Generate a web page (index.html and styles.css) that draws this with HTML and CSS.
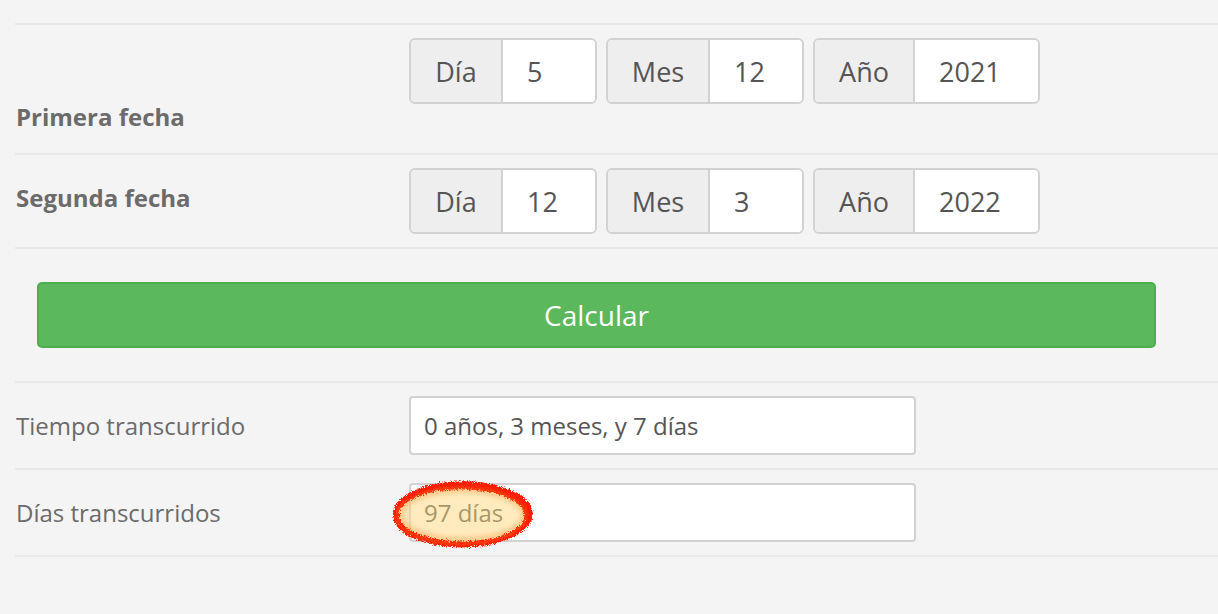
FILE: index.html
```html
<!DOCTYPE html>
<html lang="es">
<head>
<meta charset="utf-8">
<title>Calcular días entre fechas</title>
<link rel="stylesheet" href="styles.css">
</head>
<body>
<div class="form">
  <div class="row row-first">
    <label class="label label-bold label-bottom">Primera fecha</label>
    <div class="fields fields-tall">
      <div class="group"><span class="addon addon-dia">Día</span><span class="input in-dia">5</span></div>
      <div class="group"><span class="addon addon-mes">Mes</span><span class="input in-mes">12</span></div>
      <div class="group"><span class="addon addon-ano">Año</span><span class="input in-ano">2021</span></div>
    </div>
  </div>
  <div class="row">
    <label class="label label-bold label-up">Segunda fecha</label>
    <div class="fields">
      <div class="group"><span class="addon addon-dia">Día</span><span class="input in-dia">12</span></div>
      <div class="group"><span class="addon addon-mes">Mes</span><span class="input in-mes">3</span></div>
      <div class="group"><span class="addon addon-ano">Año</span><span class="input in-ano">2022</span></div>
    </div>
  </div>
  <div class="row row-button">
    <button class="btn" type="button">Calcular</button>
  </div>
  <div class="row">
    <label class="label">Tiempo transcurrido</label>
    <div class="fields"><div class="result">0 años, 3 meses, y 7 días</div></div>
  </div>
  <div class="row row-last">
    <label class="label">Días transcurridos</label>
    <div class="fields">
      <div class="result result-mark">97 días
        <svg class="mark" width="156" height="80" viewBox="0 0 156 80" aria-hidden="true">
          <defs>
            <filter id="rough" x="-10%" y="-15%" width="120%" height="130%">
              <feTurbulence type="fractalNoise" baseFrequency="1.4" numOctaves="2" seed="5" result="n"/>
              <feDisplacementMap in="SourceGraphic" in2="n" scale="6" xChannelSelector="R" yChannelSelector="G"/>
            </filter>
            <filter id="soft"><feGaussianBlur stdDeviation="2.5"/></filter>
          </defs>
          <ellipse cx="78" cy="40" rx="65" ry="28" fill="rgba(255,216,125,0.5)"/>
          <ellipse cx="78" cy="40" rx="62" ry="25" fill="none" stroke="rgba(255,150,60,0.45)" stroke-width="5" filter="url(#soft)"/>
          <g filter="url(#rough)">
            <ellipse cx="78" cy="40" rx="66" ry="29.5" fill="none" stroke="#ff2600" stroke-width="6"/>
            <ellipse cx="79" cy="39" rx="68" ry="31" fill="none" stroke="#ff1c00" stroke-width="3.5"/>
            <ellipse cx="77" cy="41" rx="64.5" ry="28" fill="none" stroke="#ff3a10" stroke-width="2.5"/>
          </g>
        </svg>
      </div>
    </div>
  </div>
</div>
</body>
</html>
```

FILE: styles.css
```css
* { box-sizing: border-box; }
body {
  margin: 0;
  background: #f4f4f4;
  font-family: "Open Sans", "Liberation Sans", sans-serif;
  color: #555;
}
.form {
  padding: 23px 0 0 15px;
}
.row {
  display: grid;
  grid-template-columns: 394px 1fr;
  border-top: 2px solid #e8e8e8;
  padding: 13px 0;
}
.row-last {
  border-bottom: 2px solid #e8e8e8;
}
.label {
  align-self: center;
  padding-left: 1px;
  font-size: 24px;
  line-height: 32px;
  color: #6b6b6b;
}
.label-bold {
  font-weight: 700;
  font-size: 24px;
  color: #6b6b6b;
}
.label-bottom {
  align-self: end;
  margin-bottom: 7px;
}
.label-up {
  padding-bottom: 6px;
}
.fields {
  display: flex;
  gap: 9px;
  align-items: flex-start;
}
.fields-tall {
  min-height: 102px;
}
.group {
  display: flex;
  height: 66px;
  border: 2px solid #d2d2d2;
  border-radius: 6px;
  overflow: hidden;
  font-size: 27px;
}
.addon {
  display: flex;
  align-items: center;
  justify-content: center;
  background: #eeeeee;
  border-right: 2px solid #d2d2d2;
  color: #555;
}
.addon-dia { width: 92px; }
.addon-mes { width: 102px; }
.addon-ano { width: 100px; }
.input {
  display: flex;
  align-items: center;
  background: #fff;
  padding-left: 24px;
  color: #555;
}
.in-dia { width: 92px; }
.in-mes { width: 92px; }
.in-ano { width: 123px; }
.row-button {
  display: block;
  padding: 33px 62px 33px 22px;
}
.btn {
  display: block;
  width: 100%;
  height: 66px;
  background: #5cb85c;
  border: 2px solid #4cae4c;
  border-radius: 5px;
  color: #fff;
  font-family: "Open Sans", "Liberation Sans", sans-serif;
  font-size: 28px;
}
.result {
  position: relative;
  width: 507px;
  height: 59px;
  background: #fff;
  border: 2px solid #d2d2d2;
  border-radius: 4px;
  padding-left: 13px;
  display: flex;
  align-items: center;
  font-size: 24px;
  color: #555;
}
.mark {
  position: absolute;
  left: -27px;
  top: -10px;
}
```
